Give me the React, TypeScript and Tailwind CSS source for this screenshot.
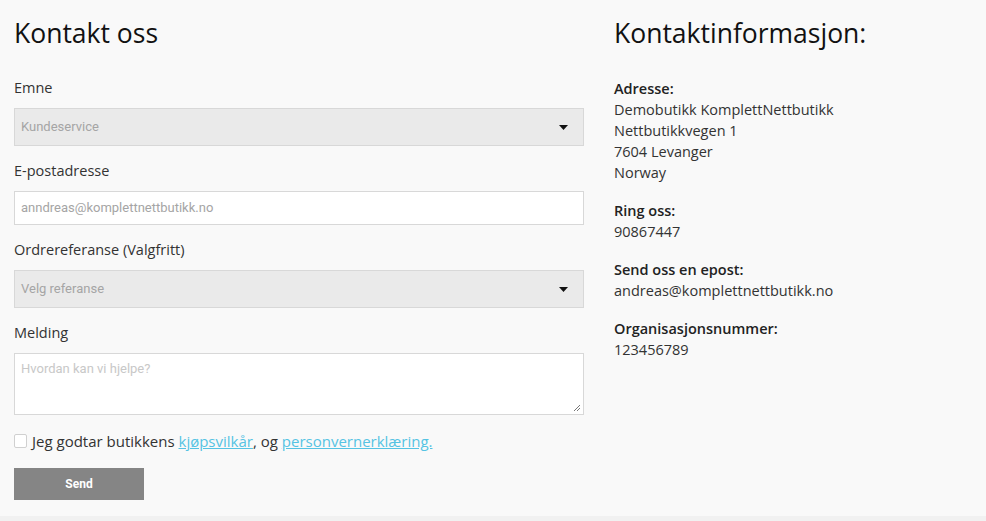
import React from 'react';

const body = { fontFamily: '"Open Sans", "Noto Sans", sans-serif' };
const field = { fontFamily: 'Roboto, "Liberation Sans", sans-serif' };

function Caret() {
  return (
    <svg width="9" height="5" viewBox="0 0 9 5" className="shrink-0">
      <path d="M0 0h9L4.5 5z" fill="#111" />
    </svg>
  );
}

function SelectBox({ value }: { value: string }) {
  return (
    <div
      className="h-[38px] flex items-center justify-between px-[6px] pr-[15px] bg-[#eaeaea] border border-[#d8d8d8] text-[13px] text-[#a5a5a5]"
      style={field}
    >
      <span>{value}</span>
      <Caret />
    </div>
  );
}

function Label({ children }: { children: React.ReactNode }) {
  return <div className="text-[14.5px] text-[#333] leading-5 mb-[10px]">{children}</div>;
}

function InfoBlock({ title, lines }: { title: string; lines: string[] }) {
  return (
    <div className="mb-[17px]">
      <div className="font-semibold text-[#222] leading-[21px]">{title}</div>
      {lines.map((l) => (
        <div key={l} className="leading-[21px]">{l}</div>
      ))}
    </div>
  );
}

export default function App() {
  return (
    <div className="min-h-[521px] bg-[#f1f1f1] flex flex-col" style={body}>
      <div className="bg-[#f9f9f9] h-[516px] flex pl-[14px] pt-[14px]">
        {/* contact form */}
        <div className="w-[570px]">
          <h1 className="text-[26.5px] leading-[38px] text-[#111] mb-[26px]">Kontakt oss</h1>

          <Label>Emne</Label>
          <SelectBox value="Kundeservice" />

          <div className="mt-[15px]">
            <Label>E-postadresse</Label>
            <div
              className="h-[34px] flex items-center px-[6px] bg-white border border-[#d8d8d8] text-[13px] text-[#a5a5a5]"
              style={field}
            >
              anndreas@komplettnettbutikk.no
            </div>
          </div>

          <div className="mt-[15px]">
            <Label>Ordrereferanse (Valgfritt)</Label>
            <SelectBox value="Velg referanse" />
          </div>

          <div className="mt-[15px]">
            <Label>Melding</Label>
            <div className="relative h-[62px] bg-white border border-[#d8d8d8] px-[6px] pt-[5px] text-[13px] text-[#c8c8c8]" style={field}>
              Hvordan kan vi hjelpe?
              <svg width="8" height="8" viewBox="0 0 8 8" className="absolute right-[2px] bottom-[2px]">
                <path d="M7 1L1 7M7 4L4 7" stroke="#777" strokeWidth="1" />
              </svg>
            </div>
          </div>

          <div className="mt-[15px] flex items-center gap-[5px] text-[15px] text-[#333]">
            <span className="w-[13px] h-[14px] bg-white border border-[#d0d0d0] rounded-[2px]" />
            <span>
              Jeg godtar butikkens{' '}
              <a className="text-[#55c3e3] underline">kjøpsvilkår</a>, og{' '}
              <a className="text-[#55c3e3] underline">personvernerklæring.</a>
            </span>
          </div>

          <button
            className="mt-[15px] w-[130px] h-[32px] bg-[#858585] text-white text-[12px] font-bold"
            style={field}
          >
            Send
          </button>
        </div>

        {/* contact details */}
        <div className="ml-[30px] text-[14.5px] text-[#333]">
          <h2 className="text-[26.5px] leading-[38px] text-[#111] mb-[26px]">Kontaktinformasjon:</h2>
          <InfoBlock
            title="Adresse:"
            lines={['Demobutikk KomplettNettbutikk', 'Nettbutikkvegen 1', '7604 Levanger', 'Norway']}
          />
          <InfoBlock title="Ring oss:" lines={['90867447']} />
          <InfoBlock title="Send oss en epost:" lines={['andreas@komplettnettbutikk.no']} />
          <InfoBlock title="Organisasjonsnummer:" lines={['123456789']} />
        </div>
      </div>
    </div>
  );
}
